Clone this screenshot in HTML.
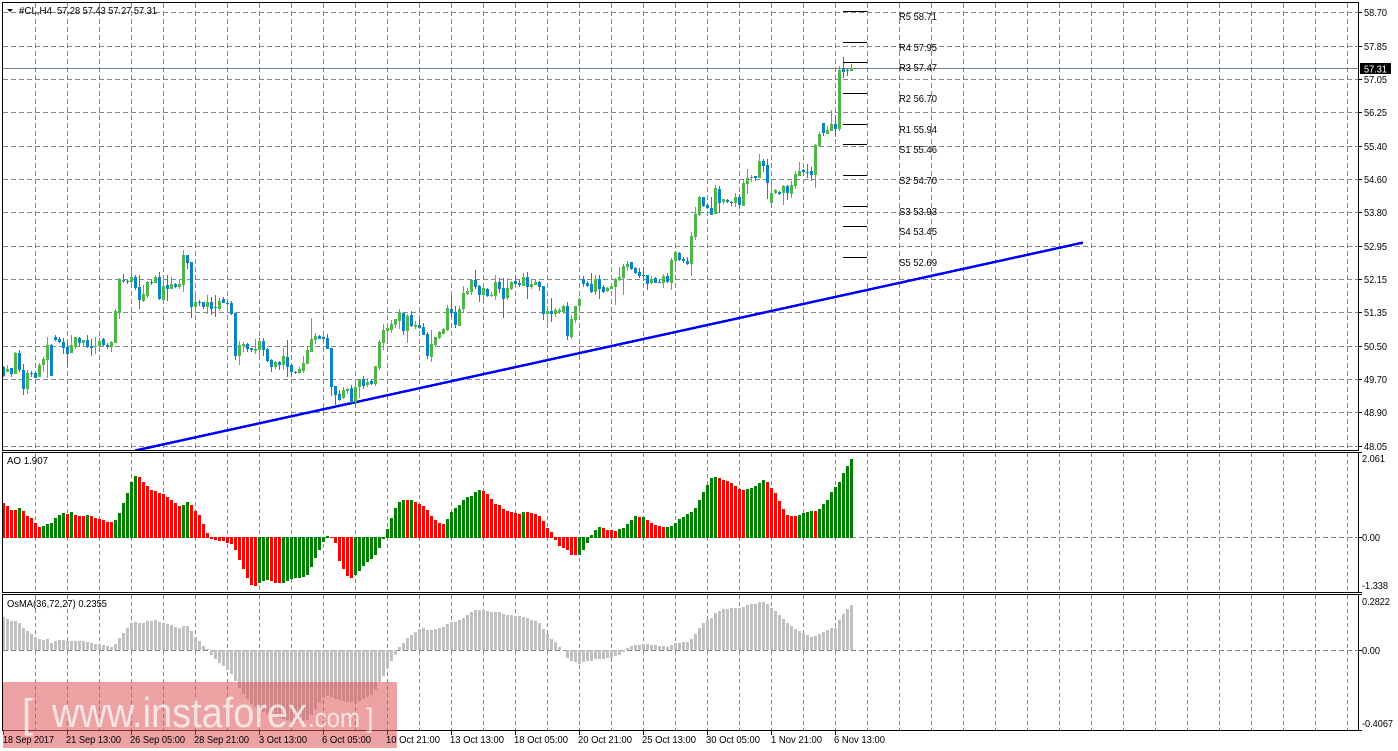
<!DOCTYPE html>
<html><head><meta charset="utf-8"><title>#CL,H4</title>
<style>
html,body{margin:0;padding:0;background:#fff;width:1398px;height:751px;overflow:hidden}
svg{display:block;position:absolute;left:0;top:0}
text{font-family:"Liberation Sans",sans-serif;font-size:10.5px;fill:#000}
</style></head><body>
<svg id="s" width="1398" height="751" viewBox="0 0 1398 751" xmlns="http://www.w3.org/2000/svg">
<g id="under" shape-rendering="crispEdges"></g>
<g id="wm">
<rect x="3" y="682" width="394" height="66" fill="rgb(220,86,86)" fill-opacity=".55" shape-rendering="crispEdges"/>
<text x="22" y="727" style="font-size:40px;fill:#fff;fill-opacity:.7">[</text>
<text x="52" y="727" textLength="255" lengthAdjust="spacingAndGlyphs" style="font-size:42px;fill:#fff;fill-opacity:.72">www.instaforex</text>
<text x="308" y="727" textLength="52" lengthAdjust="spacingAndGlyphs" style="font-size:27px;fill:#fff;fill-opacity:.72">.com</text>
<text x="366" y="727" style="font-size:27px;fill:#fff;fill-opacity:.7">]</text>
</g>
<g id="labels">
<path d="M7 9h6l-3 3z" fill="#000"/>
<text x="19" y="14" textLength="33" lengthAdjust="spacingAndGlyphs">#CL,H4</text>
<text x="57" y="14" textLength="100" lengthAdjust="spacingAndGlyphs">57.28 57.43 57.27 57.31</text>
<text x="7" y="464" textLength="41" lengthAdjust="spacingAndGlyphs">AO 1.907</text>
<text x="7" y="607" textLength="100" lengthAdjust="spacingAndGlyphs">OsMA(36,72,27) 0.2355</text>

<text x="899" y="20" textLength="38" lengthAdjust="spacingAndGlyphs">R5 58.71</text>
<text x="899" y="51" textLength="38" lengthAdjust="spacingAndGlyphs">R4 57.95</text>
<text x="899" y="71" textLength="38" lengthAdjust="spacingAndGlyphs">R3 57.47</text>
<text x="899" y="102" textLength="38" lengthAdjust="spacingAndGlyphs">R2 56.70</text>
<text x="899" y="133" textLength="38" lengthAdjust="spacingAndGlyphs">R1 55.94</text>
<text x="899" y="153" textLength="38" lengthAdjust="spacingAndGlyphs">S1 55.46</text>
<text x="899" y="184" textLength="38" lengthAdjust="spacingAndGlyphs">S2 54.70</text>
<text x="899" y="215" textLength="38" lengthAdjust="spacingAndGlyphs">S3 53.93</text>
<text x="899" y="235" textLength="38" lengthAdjust="spacingAndGlyphs">S4 53.45</text>
<text x="899" y="266" textLength="38" lengthAdjust="spacingAndGlyphs">S5 52.69</text>

<text x="1364" y="16" textLength="23" lengthAdjust="spacingAndGlyphs">58.70</text>
<text x="1364" y="50" textLength="23" lengthAdjust="spacingAndGlyphs">57.85</text>
<text x="1364" y="83" textLength="23" lengthAdjust="spacingAndGlyphs">57.05</text>
<text x="1364" y="116" textLength="23" lengthAdjust="spacingAndGlyphs">56.25</text>
<text x="1364" y="150" textLength="23" lengthAdjust="spacingAndGlyphs">55.40</text>
<text x="1364" y="183" textLength="23" lengthAdjust="spacingAndGlyphs">54.60</text>
<text x="1364" y="216" textLength="23" lengthAdjust="spacingAndGlyphs">53.80</text>
<text x="1364" y="250" textLength="23" lengthAdjust="spacingAndGlyphs">52.95</text>
<text x="1364" y="283" textLength="23" lengthAdjust="spacingAndGlyphs">52.15</text>
<text x="1364" y="316" textLength="23" lengthAdjust="spacingAndGlyphs">51.35</text>
<text x="1364" y="350" textLength="23" lengthAdjust="spacingAndGlyphs">50.50</text>
<text x="1364" y="383" textLength="23" lengthAdjust="spacingAndGlyphs">49.70</text>
<text x="1364" y="416" textLength="23" lengthAdjust="spacingAndGlyphs">48.90</text>
<text x="1364" y="450" textLength="23" lengthAdjust="spacingAndGlyphs">48.05</text>
<rect x="1360" y="63" width="31" height="11" fill="#000" shape-rendering="crispEdges"/>
<text x="1364" y="72.500" textLength="23" lengthAdjust="spacingAndGlyphs" style="fill:#fff">57.31</text>

<text x="1362" y="462" textLength="23" lengthAdjust="spacingAndGlyphs">2.061</text>
<text x="1362" y="541" textLength="18" lengthAdjust="spacingAndGlyphs">0.00</text>
<text x="1362" y="589" textLength="26" lengthAdjust="spacingAndGlyphs">-1.338</text>
<text x="1362" y="605" textLength="28" lengthAdjust="spacingAndGlyphs">0.2822</text>
<text x="1362" y="654" textLength="18" lengthAdjust="spacingAndGlyphs">0.00</text>
<text x="1362" y="727" textLength="31" lengthAdjust="spacingAndGlyphs">-0.4067</text>

<text x="3" y="743" textLength="51" lengthAdjust="spacingAndGlyphs">18 Sep 2017</text>
<text x="66" y="743" textLength="55" lengthAdjust="spacingAndGlyphs">21 Sep 13:00</text>
<text x="130" y="743" textLength="55" lengthAdjust="spacingAndGlyphs">26 Sep 05:00</text>
<text x="194" y="743" textLength="55" lengthAdjust="spacingAndGlyphs">28 Sep 21:00</text>
<text x="259" y="743" textLength="48" lengthAdjust="spacingAndGlyphs">3 Oct 13:00</text>
<text x="322" y="743" textLength="49" lengthAdjust="spacingAndGlyphs">6 Oct 05:00</text>
<text x="386" y="743" textLength="54" lengthAdjust="spacingAndGlyphs">10 Oct 21:00</text>
<text x="450" y="743" textLength="54" lengthAdjust="spacingAndGlyphs">13 Oct 13:00</text>
<text x="514" y="743" textLength="54" lengthAdjust="spacingAndGlyphs">18 Oct 05:00</text>
<text x="578" y="743" textLength="54" lengthAdjust="spacingAndGlyphs">20 Oct 21:00</text>
<text x="642" y="743" textLength="54" lengthAdjust="spacingAndGlyphs">25 Oct 13:00</text>
<text x="706" y="743" textLength="54" lengthAdjust="spacingAndGlyphs">30 Oct 05:00</text>
<text x="771" y="743" textLength="51" lengthAdjust="spacingAndGlyphs">1 Nov 21:00</text>
<text x="834" y="743" textLength="51" lengthAdjust="spacingAndGlyphs">6 Nov 13:00</text>
</g>
</svg>
<script>
(function(){
var GRID='#778899',o=[];
function path(d,c,w,extra){o.push('<path d="'+d+'" fill="none" stroke="'+c+'" stroke-width="'+w+'" '+(extra||'')+'/>');}
var dash='stroke-dasharray="5 3"',dash2='stroke-dasharray="4 3"';
var v='',v2='',k,x;
for(k=0;k<=41;k++){x=35+32*k+.5;v+='M'+x+' 3V450';v2+='M'+x+' 453V592M'+x+' 595V730';}
path(v,GRID,1,dash);
path(v2,'#80868c',1,dash2);
var hs=[12,46,79,112,146,179,212,246,279,312,346,379,412,446],h='';
hs.forEach(function(y){h+='M3 '+(y+.5)+'H1358';});
h+='M3 537.5H1358M3 650.5H1358';
path(h,GRID,1,dash);
path('M3 68.5H1358','#6f8292',1);

/* AO */
var A=[189,198,210,210,204,213,228,234,249,261,258,252,249,234,225,219,222,216,225,228,228,225,228,234,237,240,246,246,240,219,189,158,126,108,111,126,138,150,153,159,162,171,180,189,198,195,186,195,213,225,252,279,297,300,303,303,309,312,330,360,387,414,435,438,429,423,420,423,429,429,429,423,417,414,414,411,405,381,354,330,306,288,294,309,363,387,408,414,405,393,378,366,357,345,324,297,267,234,204,186];
var A2=[150,150,150,156,162,168,180,198,210,219,222,207,186,174,165,150,141,138,126,120,123,132,147,162,165,177,183,186,189,192,186,186,189,192,198,213,234,246,270,288,294,300,315,315,315,300,279,255,240,231,234,240,240,243,237,234,222,210,198,201,201,210,219,225,228,231,231,228,219,207,201,192,186,174,150,126,105,84,81,84,90,93,99,108,117,120,117,114,108,99,90,96,114,129,153,177,195,198,198,195,189,186,183,183,177,162,150,126,111,96,69,48,27];
A2.forEach(function(a){A.push(a+29);});
var runs=[4,1,5,6,1,1,3,1,6,6,11,2,17,3,3,12,6,13,1,1,8,9,10,1,13,6,4,5,1,1,5,13,7,5,8,4,1,9];
var cols=[],cur=1;
runs.forEach(function(r){for(var i=0;i<r;i++)cols.push(cur);cur=1-cur;});
var red='',green='';
A.forEach(function(a,n){var y=Math.round(537+(a-291)/3),X=3.5+4*n,s='M'+X+' '+(a<=291?538:537)+'V'+y;
 if(y===537)s='M'+X+' 536V538';
 if(cols[n])red+=s;else green+=s;});
path(red,'#ff0000',3);path(green,'#008000',3);

/* OsMA */
var O=[81,87,93,93,99,114,123,132,141,147,150,147,159,153,150,150,153,153,153,153,153,156,159,162,162,165,168,171,162,144,129,114,99,96,99,99,93,93,90,96,99,102,105,111,114,108,108,123,141,153,168,178,195,207,219,228,240,252,273,294,312,327,342,351,360,366,372,378,381,384,387,390,393,393,393,393,390,375,358,340,325,318,321,327,330,333,336,336,339,333,327,321,315,300,276,258,234,213,195,171,
159,144,135,126,117,114,120,120,117,114,111,102,96,96,90,84,75,66,60,60,60,63,66,66,66,72,75,75,78,78,81,84,90,93,99,117,132,147,156,171,180,203,213,216,222,216,213,213,207,207,207,204,204,198,195,186,174,168,165,165,162,162,165,165,168,168,171,165,159,159,156,156,147,132,114,99,90,84,69,63,57,57,54,54,54,51,45,42,42,36,36,42,54,63,75,87,99,108,117,123,129,135,141,138,132,126,120,114,114,90,72,57,45];
var gr='';
O.forEach(function(a,n){gr+='M'+(3.5+4*n)+' 650V'+Math.round(590+a/3);});
path(gr,'#c0c0c0',3);

/* trendline */
o.push('<clipPath id="mc"><rect x="3" y="3" width="1355" height="447"/></clipPath>');
path('M135 450.6L1083 242.600','#0000ff',2.5,'clip-path="url(#mc)"');

/* candles [green?,wickTop,bodyTop,bodyBot,wickBot] */
var C1=[[0,378,381,408,410],[1,375,387,396,396],[0,384,384,402,411],[1,336,339,402,402],[0,330,339,390,396],[0,372,390,447,465],[1,390,399,447,462],[0,393,399,402,411],[0,396,399,414,414],[1,369,375,411,411],
[1,351,357,375,396],[1,291,315,360,414],[0,312,315,408,408],[0,285,291,300,303],[0,291,297,306,309],[0,294,306,324,342],[0,309,321,342,375],[1,285,315,339,339],[1,291,291,321,327],[0,291,294,309,318],
[1,300,300,309,321],[0,285,300,321,324],[0,297,318,324,348],[1,291,318,321,342],[1,294,303,318,327],[0,294,297,315,318],[0,309,315,321,327],[1,303,306,321,336],[1,207,213,309,309],[1,114,117,219,237],
[0,102,120,123,129],[0,120,123,126,132],[1,78,111,126,129],[0,105,111,144,150],[0,105,141,180,207],[1,135,162,183,186],[1,123,126,168,174],[0,120,126,129,135],[1,105,111,129,129],[0,96,111,177,180],
[1,108,138,180,180],[0,105,135,147,183],[1,111,132,147,147],[0,129,132,141,144],[1,117,132,141,147],[1,30,45,135,156],[0,45,45,69,87],[0,66,66,201,234],[1,168,186,201,210],[0,180,186,189,198],
[0,186,186,201,207],[1,165,186,201,222],[0,171,186,207,225],[0,165,201,204,231],[1,174,183,207,213],[0,171,178,189,190],[0,183,189,192,198],[0,183,189,222,225],[0,219,219,348,360],[1,303,315,348,375],
[1,306,312,318,336],[0,309,312,327,336],[0,324,324,330,336],[1,297,327,333,342],[1,291,303,330,357],[0,294,303,330,348],[0,324,327,363,366],[0,357,360,381,396],[1,363,366,381,387],[0,363,366,375,390],
[1,324,348,375,390],[0,300,351,381,411],[0,372,375,396,411],[0,393,396,399,402],[1,381,387,399,402],[1,348,369,393,399],[1,321,330,372,372],[1,234,297,336,336],[1,279,288,300,312],[0,285,288,297,297],
[0,288,291,297,303],[0,282,294,327,327],[0,324,324,441,468],[0,438,438,465,495],[0,450,462,480,483],[1,441,450,474,477],[1,444,447,453,462],
[0,435,444,489,489],[1,429,441,486,489],[1,417,417,441,474],[0,408,417,438,447],[1,414,426,435,441],[0,420,423,432,435],[1,378,378,432,438],[1,300,306,384,390],[1,252,270,309,330],[1,258,264,273,303],
[1,240,252,270,279],[1,237,237,255,264],[1,207,216,243,267],[0,216,219,273,285],[1,222,228,273,309],[0,213,225,258,261],[1,243,255,261,267],[0,240,255,264,267],[0,249,261,285,285],[0,276,282,348,357],
[1,270,312,351,366],[1,291,291,315,318],[1,273,276,294,297],[1,264,267,282,282],[1,195,204,270,273],[0,168,207,219,231],[0,198,216,255,264],[1,198,207,258,258],[1,138,159,207,219],[1,144,153,162,165],
[1,117,120,156,165],[0,90,120,141,147],[0,135,138,165,186],[1,144,144,165,177],[0,144,147,168,171],[1,156,165,168,171],[1,105,126,168,180],[0,114,126,147,159],[0,114,144,177,234],[1,114,144,174,180],
[1,123,126,147,150],[0,108,123,132,135],[0,120,129,135,141],[1,99,111,138,138],[0,96,111,141,177],[1,120,132,141,147],[1,117,126,135,135],[0,123,126,141,153],[0,138,138,222,240],[1,198,213,222,252],
[0,174,213,222,246],[1,204,210,222,231],[1,204,210,216,222],[1,195,198,216,222],[0,186,198,288,300],[1,225,237,291,297],[1,198,198,240,249],[1,171,177,198,213],[0,108,117,132,141],[0,123,129,138,141],
[0,99,132,156,159],[1,105,117,156,165],[0,105,117,147,177],[0,135,141,156,159],[1,141,144,153,156],[1,132,138,147,147],[1,114,117,141,195],[1,81,111,120,123],[1,72,78,114,165],[1,63,72,81,93],
[0,66,66,87,90],[0,81,84,99,102],[0,84,96,108,114],[0,81,105,108,123],[0,105,105,132,150],[1,108,117,129,132],[0,111,114,129,129],[0,120,126,129,129],[1,102,108,129,144],[0,99,108,126,129],
[1,54,60,129,150],[1,36,36,63,87],[0,36,39,60,63],[0,51,57,63,69],[0,51,63,72,75]];
var C2=[[1,516,528,612,648],[1,441,462,531,540],[1,408,411,465,468],[0,411,411,438,441],[0,432,435,444,447],[0,411,444,465,465],[1,375,384,462,462],[0,378,387,429,459],[1,417,417,426,432],[0,417,420,426,429],
[0,423,426,429,438],[1,399,411,429,441],[0,402,411,435,447],[1,360,369,438,438],[1,327,354,372,402],[1,345,351,354,366],[0,348,348,354,363],[1,282,303,354,354],[0,297,303,318,336],[0,297,315,369,417],
[1,369,399,429,429],[1,387,390,399,402],[0,393,396,402,405],[1,375,378,399,435],[0,375,378,399,420],[1,363,375,402,414],[1,333,342,378,387],[1,306,333,348,348],[0,327,330,336,339],[0,312,336,339,354],
[0,321,333,345,363],[1,252,255,345,384],[1,216,222,258,258],[0,189,189,219,228],[1,198,210,222,222],[1,150,192,213,213],[0,168,192,207,231],[1,18,30,207,213],[0,-9,27,36,54],[0,27,30,33,48],[1,12,24,33,33]];
var gw='',gb='',bw='',bb='';
function add(c,n,off){var X=3.5+4*n,t=Math.round(off+c[1]/3),a=Math.round(off+c[2]/3),b=Math.round(off+c[3]/3),e=Math.round(off+c[4]/3);
 if(b<=a)b=a+1;if(e<=t)e=t+1;
 var w='M'+X+' '+t+'V'+e,s='M'+X+' '+a+'V'+b;
 if(c[0]){gw+=w;gb+=s;}else{bw+=w;bb+=s;}}
C1.forEach(function(c,i){add(c,i,240);});
C2.forEach(function(c,i){add(c,172+i,60);});
path(gw,'#4db848',1);path(bw,'#0a84c6',1);
path(gb,'#4db848',3);path(bb,'#0a84c6',3);

/* pivots */
var pv='';
[11,42,62,93,124,144,175,206,226,257].forEach(function(y){pv+='M843 '+(y+.5)+'H867';});
path(pv,'#000',1);

/* frames */
path('M2.5 2.500H1358.500V450.500H2.500ZM2.500 452.500H1358.500V592.500H2.500ZM2.500 594.500H1358.500V730.500H2.500Z','#000',1);
/* ticks */
var t='';
hs.forEach(function(y){t+='M1359 '+(y+.5)+'H1362';});
t+='M1359 537.5H1362M1359 650.5H1362M1359 452.5H1362M1359 592.5H1362M1359 594.5H1362M1359 730.5H1362';
[3,67,131,195,259,323,387,451,515,579,643,707,771,835].forEach(function(x){t+='M'+(x+.5)+' 731V735';});
path(t,'#000',1);
document.getElementById('under').innerHTML=o.join('');
})();
</script>
</body></html>
